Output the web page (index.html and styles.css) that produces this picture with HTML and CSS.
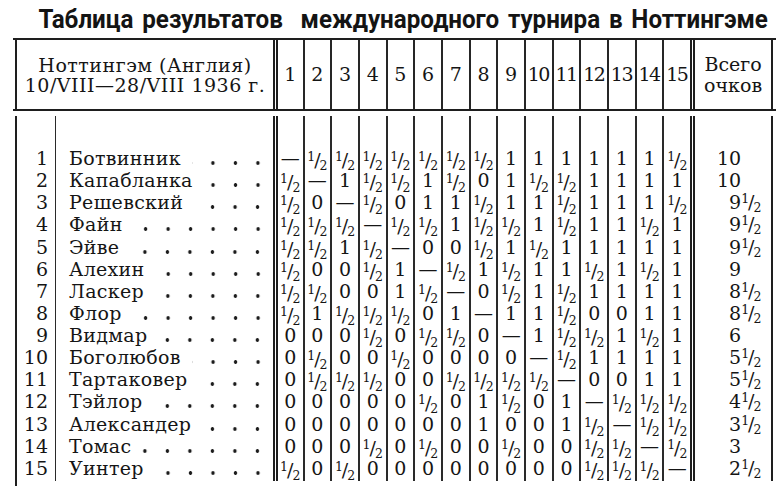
FILE: index.html
```html
<!DOCTYPE html>
<html lang="ru">
<head>
<meta charset="utf-8">
<title>Таблица результатов международного турнира в Ноттингэме</title>
<link rel="stylesheet" href="styles.css">
</head>
<body>
<div class="sheet">
  <h1 class="title"><span>Таблица результатов  международного турнира в Ноттингэме</span></h1>
  <div class="head">
    <div class="g hg">
      <div class="place">Ноттингэм (Англия)<br>10/VIII—28/VIII 1936 г.</div>
      <div>1</div><div>2</div><div>3</div><div>4</div><div>5</div><div>6</div><div>7</div><div>8</div><div>9</div><div class="two">10</div><div class="two">11</div><div class="two">12</div><div class="two">13</div><div class="two">14</div><div class="two">15</div>
      <div class="tot">Всего<br>очков</div>
    </div>
  </div>
  <div class="body">
    <div class="g r sp"><span class="n"></span><span class="nm"></span><span></span><span></span><span></span><span></span><span></span><span></span><span></span><span></span><span></span><span></span><span></span><span></span><span></span><span></span><span></span><span class="s"></span></div>

    <div class="g r"><span class="n">1</span><span class="nm">Ботвинник<i class="dots"></i></span><span>—</span><span><sup>1</sup>/<sub>2</sub></span><span><sup>1</sup>/<sub>2</sub></span><span><sup>1</sup>/<sub>2</sub></span><span><sup>1</sup>/<sub>2</sub></span><span><sup>1</sup>/<sub>2</sub></span><span><sup>1</sup>/<sub>2</sub></span><span><sup>1</sup>/<sub>2</sub></span><span>1</span><span>1</span><span>1</span><span>1</span><span>1</span><span>1</span><span><sup>1</sup>/<sub>2</sub></span><span class="s"><span class="i">10</span></span></div>

    <div class="g r"><span class="n">2</span><span class="nm">Капабланка<i class="dots"></i></span><span><sup>1</sup>/<sub>2</sub></span><span>—</span><span>1</span><span><sup>1</sup>/<sub>2</sub></span><span><sup>1</sup>/<sub>2</sub></span><span>1</span><span><sup>1</sup>/<sub>2</sub></span><span>0</span><span>1</span><span><sup>1</sup>/<sub>2</sub></span><span><sup>1</sup>/<sub>2</sub></span><span>1</span><span>1</span><span>1</span><span>1</span><span class="s"><span class="i">10</span></span></div>

    <div class="g r"><span class="n">3</span><span class="nm">Решевский<i class="dots"></i></span><span><sup>1</sup>/<sub>2</sub></span><span>0</span><span>—</span><span><sup>1</sup>/<sub>2</sub></span><span>0</span><span>1</span><span>1</span><span><sup>1</sup>/<sub>2</sub></span><span>1</span><span>1</span><span><sup>1</sup>/<sub>2</sub></span><span>1</span><span>1</span><span>1</span><span><sup>1</sup>/<sub>2</sub></span><span class="s"><span class="i">9</span><sup>1</sup>/<sub>2</sub></span></div>

    <div class="g r"><span class="n">4</span><span class="nm">Файн<i class="dots"></i></span><span><sup>1</sup>/<sub>2</sub></span><span><sup>1</sup>/<sub>2</sub></span><span><sup>1</sup>/<sub>2</sub></span><span>—</span><span><sup>1</sup>/<sub>2</sub></span><span><sup>1</sup>/<sub>2</sub></span><span>1</span><span><sup>1</sup>/<sub>2</sub></span><span><sup>1</sup>/<sub>2</sub></span><span>1</span><span><sup>1</sup>/<sub>2</sub></span><span>1</span><span>1</span><span><sup>1</sup>/<sub>2</sub></span><span>1</span><span class="s"><span class="i">9</span><sup>1</sup>/<sub>2</sub></span></div>

    <div class="g r"><span class="n">5</span><span class="nm">Эйве<i class="dots"></i></span><span><sup>1</sup>/<sub>2</sub></span><span><sup>1</sup>/<sub>2</sub></span><span>1</span><span><sup>1</sup>/<sub>2</sub></span><span>—</span><span>0</span><span>0</span><span><sup>1</sup>/<sub>2</sub></span><span>1</span><span><sup>1</sup>/<sub>2</sub></span><span>1</span><span>1</span><span>1</span><span>1</span><span>1</span><span class="s"><span class="i">9</span><sup>1</sup>/<sub>2</sub></span></div>

    <div class="g r"><span class="n">6</span><span class="nm">Алехин<i class="dots"></i></span><span><sup>1</sup>/<sub>2</sub></span><span>0</span><span>0</span><span><sup>1</sup>/<sub>2</sub></span><span>1</span><span>—</span><span><sup>1</sup>/<sub>2</sub></span><span>1</span><span><sup>1</sup>/<sub>2</sub></span><span>1</span><span>1</span><span><sup>1</sup>/<sub>2</sub></span><span>1</span><span><sup>1</sup>/<sub>2</sub></span><span>1</span><span class="s"><span class="i">9</span></span></div>

    <div class="g r"><span class="n">7</span><span class="nm">Ласкер<i class="dots"></i></span><span><sup>1</sup>/<sub>2</sub></span><span><sup>1</sup>/<sub>2</sub></span><span>0</span><span>0</span><span>1</span><span><sup>1</sup>/<sub>2</sub></span><span>—</span><span>0</span><span><sup>1</sup>/<sub>2</sub></span><span>1</span><span><sup>1</sup>/<sub>2</sub></span><span>1</span><span>1</span><span>1</span><span>1</span><span class="s"><span class="i">8</span><sup>1</sup>/<sub>2</sub></span></div>

    <div class="g r"><span class="n">8</span><span class="nm">Флор<i class="dots"></i></span><span><sup>1</sup>/<sub>2</sub></span><span>1</span><span><sup>1</sup>/<sub>2</sub></span><span><sup>1</sup>/<sub>2</sub></span><span><sup>1</sup>/<sub>2</sub></span><span>0</span><span>1</span><span>—</span><span>1</span><span>1</span><span><sup>1</sup>/<sub>2</sub></span><span>0</span><span>0</span><span>1</span><span>1</span><span class="s"><span class="i">8</span><sup>1</sup>/<sub>2</sub></span></div>

    <div class="g r"><span class="n">9</span><span class="nm">Видмар<i class="dots"></i></span><span>0</span><span>0</span><span>0</span><span><sup>1</sup>/<sub>2</sub></span><span>0</span><span><sup>1</sup>/<sub>2</sub></span><span><sup>1</sup>/<sub>2</sub></span><span>0</span><span>—</span><span>1</span><span><sup>1</sup>/<sub>2</sub></span><span><sup>1</sup>/<sub>2</sub></span><span>1</span><span><sup>1</sup>/<sub>2</sub></span><span>1</span><span class="s"><span class="i">6</span></span></div>

    <div class="g r"><span class="n">10</span><span class="nm">Боголюбов<i class="dots"></i></span><span>0</span><span><sup>1</sup>/<sub>2</sub></span><span>0</span><span>0</span><span><sup>1</sup>/<sub>2</sub></span><span>0</span><span>0</span><span>0</span><span>0</span><span>—</span><span><sup>1</sup>/<sub>2</sub></span><span>1</span><span>1</span><span>1</span><span>1</span><span class="s"><span class="i">5</span><sup>1</sup>/<sub>2</sub></span></div>

    <div class="g r"><span class="n">11</span><span class="nm">Тартаковер<i class="dots"></i></span><span>0</span><span><sup>1</sup>/<sub>2</sub></span><span><sup>1</sup>/<sub>2</sub></span><span><sup>1</sup>/<sub>2</sub></span><span>0</span><span>0</span><span><sup>1</sup>/<sub>2</sub></span><span><sup>1</sup>/<sub>2</sub></span><span><sup>1</sup>/<sub>2</sub></span><span><sup>1</sup>/<sub>2</sub></span><span>—</span><span>0</span><span>0</span><span>1</span><span>1</span><span class="s"><span class="i">5</span><sup>1</sup>/<sub>2</sub></span></div>

    <div class="g r"><span class="n">12</span><span class="nm">Тэйлор<i class="dots"></i></span><span>0</span><span>0</span><span>0</span><span>0</span><span>0</span><span><sup>1</sup>/<sub>2</sub></span><span>0</span><span>1</span><span><sup>1</sup>/<sub>2</sub></span><span>0</span><span>1</span><span>—</span><span><sup>1</sup>/<sub>2</sub></span><span><sup>1</sup>/<sub>2</sub></span><span><sup>1</sup>/<sub>2</sub></span><span class="s"><span class="i">4</span><sup>1</sup>/<sub>2</sub></span></div>

    <div class="g r"><span class="n">13</span><span class="nm">Александер<i class="dots"></i></span><span>0</span><span>0</span><span>0</span><span>0</span><span>0</span><span>0</span><span>0</span><span>1</span><span>0</span><span>0</span><span>1</span><span><sup>1</sup>/<sub>2</sub></span><span>—</span><span><sup>1</sup>/<sub>2</sub></span><span><sup>1</sup>/<sub>2</sub></span><span class="s"><span class="i">3</span><sup>1</sup>/<sub>2</sub></span></div>

    <div class="g r"><span class="n">14</span><span class="nm">Томас<i class="dots"></i></span><span>0</span><span>0</span><span>0</span><span><sup>1</sup>/<sub>2</sub></span><span>0</span><span><sup>1</sup>/<sub>2</sub></span><span>0</span><span>0</span><span><sup>1</sup>/<sub>2</sub></span><span>0</span><span>0</span><span><sup>1</sup>/<sub>2</sub></span><span><sup>1</sup>/<sub>2</sub></span><span>—</span><span><sup>1</sup>/<sub>2</sub></span><span class="s"><span class="i">3</span></span></div>

    <div class="g r"><span class="n">15</span><span class="nm">Уинтер<i class="dots"></i></span><span><sup>1</sup>/<sub>2</sub></span><span>0</span><span><sup>1</sup>/<sub>2</sub></span><span>0</span><span>0</span><span>0</span><span>0</span><span>0</span><span>0</span><span>0</span><span>0</span><span><sup>1</sup>/<sub>2</sub></span><span><sup>1</sup>/<sub>2</sub></span><span><sup>1</sup>/<sub>2</sub></span><span>—</span><span class="s"><span class="i">2</span><sup>1</sup>/<sub>2</sub></span></div>
  </div>
</div>
</body>
</html>
```

FILE: styles.css
```css
* {
  box-sizing: border-box;
  margin: 0;
  padding: 0;
}

html, body {
  background: #ffffff;
}

body {
  width: 783px;
  height: 486px;
  overflow: hidden;
  color: #151515;
  font-family: "DejaVu Serif", "Liberation Serif", serif;
  font-size: 19px;
}

.sheet {
  padding-left: 13px;
  width: 776px;
}

.title {
  height: 38px;
  display: flex;
  justify-content: center;
  padding-left: 18px;
  font-family: Roboto, "DejaVu Sans", sans-serif;
  font-weight: 700;
  font-size: 26px;
  line-height: 38px;
  white-space: pre;
  color: #141414;
}

.title span {
  display: inline-block;
  transform: scaleX(0.93);
  word-spacing: 3px;
}

.head {
  border-top: 2px solid #1e1e1e;
  border-bottom: 2px solid #1e1e1e;
  padding-left: 2px;
  height: 73px;
}

.g {
  display: grid;
  grid-template-columns: 39px 217px 29.5px repeat(14, 27.7px) 83px;
}

.hg {
  height: 69px;
  border-left: 2px solid #1e1e1e;
}

.hg > div {
  display: flex;
  align-items: center;
  justify-content: center;
  border-left: 2px solid #262626;
  line-height: 21px;
  text-align: center;
}

.hg > .place {
  grid-column: 1 / span 2;
  border-left: none;
  line-height: 20px;
  padding-top: 1px;
  letter-spacing: 0.5px;
}

.hg > div:nth-child(2) {
  border-left: 5px double #1e1e1e;
}

.hg > .two {
  letter-spacing: -1.5px;
  padding-right: 1px;
}

.hg > .tot {
  border-left: 5px double #1e1e1e;
  border-right: 2px solid #1e1e1e;
  padding-top: 1px;
}

.body {
  margin-top: 5px;
  margin-left: 2px;
  border-left: 2px solid #1e1e1e;
  padding-bottom: 7px;
}

.r {
  height: 22.14px;
}

.r.sp {
  height: 31px;
}

.r > span {
  display: block;
  text-align: center;
  line-height: 22px;
  border-left: 2px solid #2a2a2a;
  white-space: nowrap;
}

.r > span:has(sup) {
  padding-top: 2px;
}

.r > .n {
  border-left: none;
  border-right: 1.5px solid #2a2a2a;
  text-align: right;
  padding-right: 7px;
}

.r > .nm {
  border-left: none;
  display: flex;
  text-align: left;
  padding-left: 13px;
  padding-right: 4px;
  letter-spacing: 0.3px;
}

.r > span:nth-child(3) {
  border-left: 5px double #1e1e1e;
}

.dots {
  flex: 1;
  margin-left: 11px;
  background-image: radial-gradient(circle at 11.25px 16px, #1c1c1c 1.5px, rgba(0, 0, 0, 0) 2.1px);
  background-size: 22.5px 22px;
  background-position: right top;
  background-repeat: repeat-x;
}

.r > .s {
  border-left: 5px double #1e1e1e;
  border-right: 2px solid #1e1e1e;
  text-align: left;
}

.r > .s:has(sup) {
  padding-top: 0;
}

.s .i {
  display: inline-block;
  width: 46px;
  text-align: right;
}

sup, sub {
  font-size: 12.5px;
  line-height: 0;
  vertical-align: baseline;
  position: relative;
}

sup {
  top: -6px;
  margin-right: -1px;
}

sub {
  top: 3px;
  margin-left: -1px;
}
```
